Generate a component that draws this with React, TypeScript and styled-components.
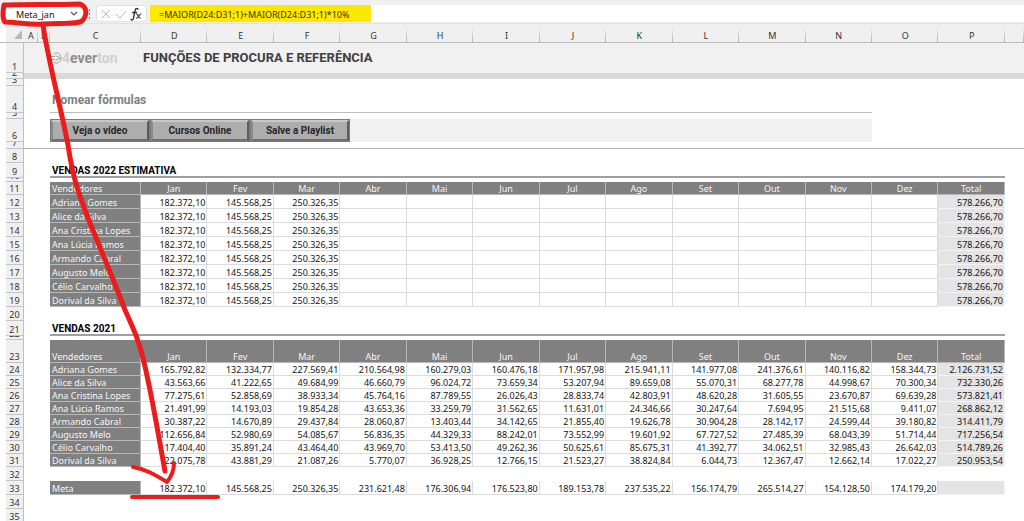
import React from "react";
import styled, { createGlobalStyle } from "styled-components";

const GlobalStyle = createGlobalStyle`
  * { box-sizing: border-box; }
  body { margin: 0; background: #fff; }
  button, input { font: inherit; color: inherit; margin: 0; }
`;

const App = styled.main`
  position: relative;
  height: 100vh;
  overflow: hidden;
  font: 9px/11px "Noto Sans", "Open Sans", sans-serif;
  color: #141414;
`;

const FormulaBar = styled.div`
  display: flex;
  align-items: stretch;
  gap: 3px;
  height: 24px;
  padding: 5px 0 1px 6px;
  background: #f0f0f0;
  border-bottom: 1px solid #e2e2e2;
`;

const Field = styled.div`
  display: flex;
  align-items: center;
  background: #fff;
  border-radius: 3px;
`;

const NameField = styled(Field)`
  width: 78px;
  padding: 1px 5px 0 10px;
`;

const NameInput = styled.input`
  width: 50px;
  padding: 0;
  border: 0;
  background: none;
`;

const IconButton = styled.button`
  display: flex;
  padding: 0;
  border: 0;
  background: none;
`;

const Actions = styled(Field)`
  width: 51px;
  justify-content: space-between;
  padding: 0 4px;
  border: 1px solid #e0e0e0;
`;

const FormulaField = styled(Field)`
  flex: 1;
  align-items: stretch;
  border-radius: 0;
`;

const FormulaInput = styled.input`
  width: 221px;
  padding: 1px 9px 0;
  border: 0;
  background: #ffe800;
  color: #3a3200;
`;

const Grip = styled.svg`
  align-self: center;
`;

const Sheet = styled.table`
  width: 100%;
  table-layout: fixed;
  border-collapse: separate;
  border-spacing: 0;

  th, td { padding: 0; font-weight: 400; }
`;

const Col = styled.col<{ $w?: number }>`
  width: ${(p) => (p.$w ? `${p.$w}px` : "auto")};
`;

const Row = styled.tr<{ $h: number }>`
  height: ${(p) => p.$h}px;
`;

const Letter = styled.th`
  height: 19px;
  padding-top: 5px !important;
  background: linear-gradient(#f0f0f0, #b4b4b4) right bottom / 1px 15px no-repeat #f0f0f0;
  border-bottom: 1px solid #bdbdbd;
  color: #333;
`;

const Corner = styled(Letter)`
  text-align: right;
  background: linear-gradient(to right, #fff 6px, #f0f0f0 6px);
`;

const RowHead = styled.th`
  padding-left: 6px !important;
  border-right: 1px solid #c0c0c0;
  color: #333;
  line-height: 10px;
`;

const RowNumber = styled.div<{ $h: number }>`
  display: flex;
  align-items: flex-end;
  justify-content: center;
  height: ${(p) => p.$h}px;
  overflow: hidden;
  background: #f0f0f0;
  border-bottom: 1px solid #c4c4c4;
`;

const Fill = styled.td<{ $bg?: string; $line?: string }>`
  background: ${(p) => p.$bg || "transparent"};
  border-bottom: ${(p) => p.$line || "0"};
`;

const Banner = styled.div`
  display: flex;
  align-items: center;
  gap: 27px;
  height: 29px;
`;

const Logo = styled.a`
  display: flex;
  align-items: center;
  width: 66px;
  padding-left: 1px;
  color: #8e8e8e;
  font: bold 14px/18px Roboto, sans-serif;
  text-decoration: none;

  svg { flex: none; }
`;

const Pale = styled.span`
  color: #cfcfcf;
`;

const Title = styled.h1`
  margin: 0;
  color: #404040;
  font: bold 13px/18px Roboto, sans-serif;
`;

const Subtitle = styled.h2`
  margin: 0;
  padding: 2px 0 0 2px;
  color: #808080;
  font: bold 12px/16px Roboto, sans-serif;
`;

const Section = styled.h3`
  margin: 0;
  padding: 2px 0 0 2px;
  color: #000;
  font: bold 10px/11px Roboto, sans-serif;
`;

const ButtonBar = styled.div`
  display: flex;
  height: 23px;
`;

const BevelButton = styled.button`
  width: 100px;
  padding: 1px 0 0;
  border: 3px solid;
  border-color: #c8c8c8 #5c5c5c #707070 #8a8a8a;
  outline: 1px solid #7c7c7c;
  outline-offset: -1px;
  background: #adadad;
  color: #262626;
  font: bold 10px/12px Roboto, sans-serif;
`;

const Cell = styled.td`
  text-align: right;
  vertical-align: bottom;
  padding-right: 1px !important;
  border-right: 1px solid #dcdcdc;
  border-bottom: 1px solid #dcdcdc;
  white-space: nowrap;
`;

const TotalCell = styled(Cell)`
  background: #e4e4e4;
  border-color: #f4f4f4;
`;

const Head = styled.th`
  vertical-align: bottom;
  background: #808080;
  border-right: 1px solid #b8b8b8;
  border-bottom: 1px solid #b8b8b8;
  color: #f6f6f6;
`;

const Label = styled(Head)`
  text-align: left;
  padding-left: 2px !important;
  white-space: nowrap;
`;

const Ink = styled.svg`
  position: absolute;
  left: 0;
  top: 0;
  pointer-events: none;
`;

const letters = "ABCDEFGHIJKLMNOP".split("");
const months = ["Jan", "Fev", "Mar", "Abr", "Mai", "Jun", "Jul", "Ago", "Set", "Out", "Nov", "Dez"];
const people = [
  "Adriana Gomes", "Alice da Silva", "Ana Cristina Lopes", "Ana Lúcia Ramos",
  "Armando Cabral", "Augusto Melo", "Célio Carvalho", "Dorival da Silva",
];
const sales = [
  "165.792,82 132.334,77 227.569,41 210.564,98 160.279,03 160.476,18 171.957,98 215.941,11 141.977,08 241.376,61 140.116,82 158.344,73 2.126.731,52",
  "43.563,66 41.222,65 49.684,99 46.660,79 96.024,72 73.659,34 53.207,94 89.659,08 55.070,31 68.277,78 44.998,67 70.300,34 732.330,26",
  "77.275,61 52.858,69 38.933,34 45.764,16 87.789,55 26.026,43 28.833,74 42.803,91 48.620,28 31.605,55 23.670,87 69.639,28 573.821,41",
  "21.491,99 14.193,03 19.854,28 43.653,36 33.259,79 31.562,65 11.631,01 24.346,66 30.247,64 7.694,95 21.515,68 9.411,07 268.862,12",
  "30.387,22 14.670,89 29.437,84 28.060,87 13.403,44 34.142,65 21.855,40 19.626,78 30.904,28 28.142,17 24.599,44 39.180,82 314.411,79",
  "112.656,84 52.980,69 54.085,67 56.836,35 44.329,33 88.242,01 73.552,99 19.601,92 67.727,52 27.485,39 68.043,39 51.714,44 717.256,54",
  "17.404,40 35.891,24 43.464,40 43.969,70 53.413,50 49.262,36 50.625,61 85.675,31 41.392,77 34.062,51 32.985,43 26.642,03 514.789,26",
  "22.075,78 43.881,29 21.087,26 5.770,07 36.928,25 12.766,15 21.523,27 38.824,84 6.044,73 12.367,47 12.662,14 17.022,27 250.953,54",
].map((line) => line.split(" "));
const goals =
  "182.372,10 145.568,25 250.326,35 231.621,48 176.306,94 176.523,80 189.153,78 237.535,22 156.174,79 265.514,27 154.128,50 174.179,20".split(" ");
const estimate = ["182.372,10", "145.568,25", "250.326,35", "", "", "", "", "", "", "", "", "", "578.266,70"];

function SheetRow({ n, h, children }: { n: number; h: number; children?: React.ReactNode }) {
  return (
    <Row $h={h}>
      <RowHead scope="row"><RowNumber $h={h}>{n}</RowNumber></RowHead>
      {children ?? <td colSpan={17} />}
    </Row>
  );
}

function HeadRow({ n, h }: { n: number; h: number }) {
  return (
    <SheetRow n={n} h={h}>
      <td colSpan={2} />
      <Label scope="col">Vendedores</Label>
      {months.map((m) => <Head scope="col" key={m}>{m}</Head>)}
      <Head scope="col">Total</Head>
      <td />
    </SheetRow>
  );
}

function DataRow({ n, h, label, values }: { n: number; h: number; label: string; values: string[] }) {
  return (
    <SheetRow n={n} h={h}>
      <td colSpan={2} />
      <Label scope="row">{label}</Label>
      {months.map((m, i) => <Cell key={m}>{values[i]}</Cell>)}
      <TotalCell>{values[12]}</TotalCell>
      <td />
    </SheetRow>
  );
}

function SectionRow({ n, title }: { n: number; title: string }) {
  return (
    <SheetRow n={n} h={15}>
      <td colSpan={2} />
      <Fill colSpan={14} $line="2px solid #a0a0a0"><Section>{title}</Section></Fill>
      <td />
    </SheetRow>
  );
}

export default function Workbook() {
  return (
    <App>
      <GlobalStyle />
      <FormulaBar>
        <NameField>
          <NameInput aria-label="Caixa de nome" defaultValue="Meta_jan" />
          <IconButton aria-label="Abrir nomes">
            <svg width="13" height="8" viewBox="0 0 13 8" fill="none" stroke="#555" strokeWidth="1.2"><path d="M5 2l3 3 3-3" /></svg>
          </IconButton>
        </NameField>
        <Grip width="6" height="10" fill="#888"><path d="M2 0h1v2H2zM2 4h1v2H2zM2 8h1v2H2z" /></Grip>
        <Actions>
          <IconButton aria-label="Cancelar">
            <svg width="10" height="10" stroke="#b5b5b5"><path d="M1 1l8 8M9 1l-8 8" /></svg>
          </IconButton>
          <IconButton aria-label="Inserir">
            <svg width="12" height="10" fill="none" stroke="#b5b5b5"><path d="M1 5l4 4 6-7" /></svg>
          </IconButton>
          <IconButton aria-label="Inserir função">
            <svg width="12" height="14" fill="none" stroke="#333" strokeLinecap="round">
              <path strokeWidth="1.4" d="M8 2C6 .6 5.300 2 5 4L3.500 11C3.200 13 2 13.300 1 12.500M2.500 5.500h4" />
              <path strokeWidth="1.100" d="M6.500 7c1.500-.7 1.700 4.500 4 4M11 6.800c-1.500.2-2.700 4.400-4.500 4.400" />
            </svg>
          </IconButton>
        </Actions>
        <FormulaField>
          <FormulaInput aria-label="Fórmula" defaultValue="=MAIOR(D24:D31;1)+MAIOR(D24:D31;1)*10%" />
        </FormulaField>
      </FormulaBar>

      <Sheet>
        <colgroup>
          <Col $w={24} /><Col $w={14} /><Col $w={12} /><Col $w={91} />
          {letters.slice(3).map((l) => <Col key={l} />)}
          <Col $w={19} />
        </colgroup>
        <thead>
          <Row $h={19}>
            <Corner aria-label="Selecionar tudo">
              <svg width="10" height="9" fill="#b8b8b8"><path d="M8 0v9H0z" /></svg>
            </Corner>
            {letters.map((l) => <Letter scope="col" key={l}>{l}</Letter>)}
            <Letter />
          </Row>
        </thead>
        <tbody>
          <SheetRow n={1} h={30}>
            <Fill colSpan={2} $bg="#f1f1f1" />
            <Fill colSpan={15} $bg="#f1f1f1">
              <Banner>
                <Logo href="#inicio">
                  <svg width="11" height="12" viewBox="0 0 11 12" fill="none" stroke="#a0a0a0" strokeWidth="1">
                    <path d="M2.500 2A4.800 5 0 1 1 2.500 10M0 4.500h4M0 7.500h4M4.500 3.500L9 6 4.500 8.500" />
                  </svg>
                  <Pale>4</Pale>ever<Pale>ton</Pale>
                </Logo>
                <Title>FUNÇÕES DE PROCURA E REFERÊNCIA</Title>
              </Banner>
            </Fill>
          </SheetRow>
          <SheetRow n={2} h={6}><Fill colSpan={17} $bg="#d9d9d9" /></SheetRow>
          <SheetRow n={3} h={7} />
          <SheetRow n={4} h={27}>
            <td colSpan={2} />
            <Fill colSpan={12} $line="1px solid #bfbfbf"><Subtitle>Nomear fórmulas</Subtitle></Fill>
            <td colSpan={3} />
          </SheetRow>
          <SheetRow n={5} h={6} />
          <SheetRow n={6} h={23}>
            <td colSpan={2} />
            <Fill colSpan={12} $bg="#f1f1f1">
              <ButtonBar>
                <BevelButton>Veja o vídeo</BevelButton>
                <BevelButton>Cursos Online</BevelButton>
                <BevelButton>Salve a Playlist</BevelButton>
              </ButtonBar>
            </Fill>
            <td colSpan={3} />
          </SheetRow>
          <SheetRow n={7} h={7}><Fill colSpan={17} $line="1px solid #b0b0b0" /></SheetRow>
          <SheetRow n={8} h={14} />
          <SectionRow n={9} title="VENDAS 2022 ESTIMATIVA" />
          <SheetRow n={10} h={4} />
          <HeadRow n={11} h={13} />
          {people.map((p, i) => <DataRow key={p} n={12 + i} h={14} label={p} values={estimate} />)}
          <SheetRow n={20} h={14} />
          <SectionRow n={21} title="VENDAS 2021" />
          <SheetRow n={22} h={4} />
          <HeadRow n={23} h={23} />
          {people.map((p, i) => <DataRow key={p} n={24 + i} h={13} label={p} values={sales[i]} />)}
          <SheetRow n={32} h={14} />
          <DataRow n={33} h={14} label="Meta" values={goals} />
          <SheetRow n={34} h={14} />
          <SheetRow n={35} h={14} />
        </tbody>
      </Sheet>

      <Ink width="230" height="510" fill="none" stroke="#ec1c1c" strokeWidth="4" strokeLinecap="round" strokeLinejoin="round" aria-hidden="true">
        <path strokeWidth="5" d="M5 5C25 4 55 5 80 4C86 6 88 14 83 20C80 24 70 23 43 24C30 25 15 22 5 22C2 18 3 10 4 5" />
        <path strokeWidth="5" d="M43 25C48 60 61 108 68 145C71 166 74 178 78 190C86 217 110 269 125 310C134 330 139 341 143 358C151 390 158 433 165 471" />
        <path d="M133 467C146 469 157 476 167 482C171 477 174 470 174 463" />
        <path d="M132 497H218" />
      </Ink>
    </App>
  );
}
